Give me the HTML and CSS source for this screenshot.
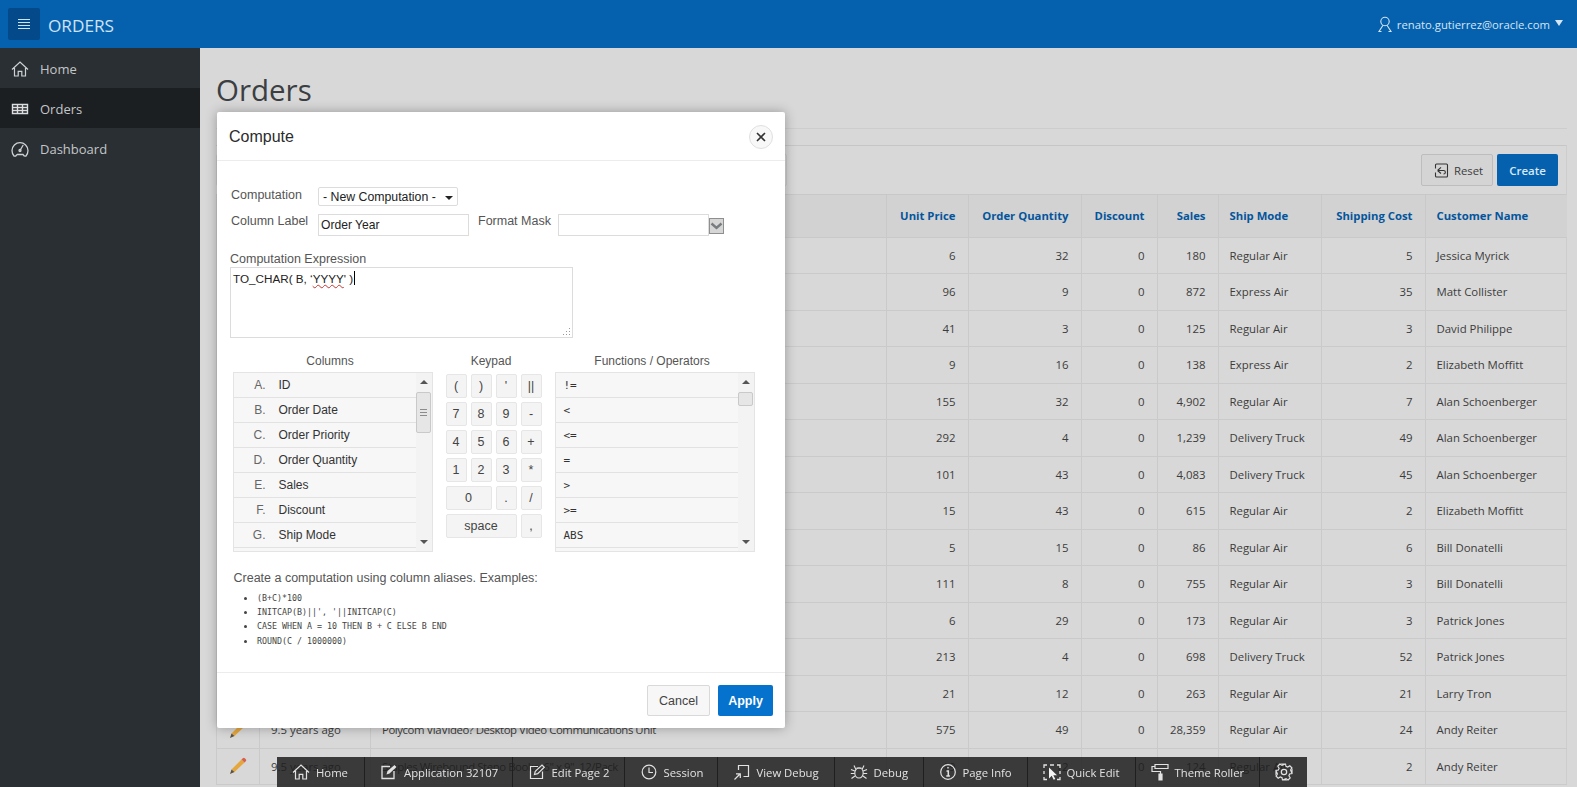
FILE: index.html
```html
<!DOCTYPE html>
<html lang="en">
<head>
  <meta charset="UTF-8" />
  <title>Orders</title>
  <link rel="stylesheet" href="styles.css">
</head>
<body>
  <header class="topbar">
    <button class="menu-btn" aria-label="Menu">
      <svg width="16" height="16" viewBox="0 0 16 16" stroke="#cfe3f5" stroke-width="1"><path d="M2 3.5h12M2 6.5h12M2 9.5h12M2 12.5h12"/></svg>
    </button>
    <div class="app-name">ORDERS</div>
    <div class="user">
      <svg width="14" height="17" viewBox="0 0 14 17" fill="none" stroke="#d5e5f3" stroke-width="1.1"><circle cx="7" cy="5.500" r="4.200"/><path d="M5 9.300 1 15.500h2.500M9 9.300l4 6.200h-2.500"/></svg>
      <span>renato.gutierrez@oracle.com</span>
      <i class="caret"></i>
    </div>
  </header>

  <div class="layout">
    <aside class="sidebar">
      <a class="nav-item">
        <svg width="18" height="18" viewBox="0 0 18 18" fill="none" stroke="#cfd2d4" stroke-width="1.2"><path d="M1 9.500 9 2l8 7.500M3.500 8v8h3.700v-4.600h3.600V16h3.700V8"/></svg>
        Home
      </a>
      <a class="nav-item active">
        <svg width="18" height="18" viewBox="0 0 18 18" fill="none" stroke="#dcdee0" stroke-width="1.400"><path d="M1.500 4.500h15v9h-15zM1.500 7.500h15M1.500 10.500h15M6.500 4.500v9M11.500 4.500v9"/></svg>
        Orders
      </a>
      <a class="nav-item">
        <svg width="18" height="18" viewBox="0 0 18 18" fill="none" stroke="#cfd2d4" stroke-width="1.300"><path d="M4.500 16.200h-1.300a8 8 0 1 1 11.600 0h-1.300M4.500 16.200l1.500-1.700M13.500 16.200 12 14.500h-6M9 10.500l3.200-5.500"/><circle cx="9" cy="10.500" r="1"/></svg>
        Dashboard
      </a>
    </aside>

    <main class="content">
      <h1 class="page-title">Orders</h1>
      <section class="panel">
        <div class="toolbar">
          <div class="search"></div>
          <button class="btn-reset">
            <svg width="15" height="15" viewBox="0 0 15 15" fill="none" stroke="#333" stroke-width="1.100"><path d="M1.500 5.500V2a1 1 0 0 1 1-1h10a1 1 0 0 1 1 1v11a1 1 0 0 1-1 1h-10a1 1 0 0 1-1-1V9.500"/><path d="M3.500 7.500 7 4.300M3.500 7.500 7 10.500M3.500 7.500h6c2.500 0 2.500 3.500 0 3.500"/></svg>
            Reset
          </button>
          <button class="btn-create">Create</button>
        </div>
        <table class="report">
          <colgroup>
            <col class="c-edit"><col class="c-date"><col class="c-product"><col class="c-price"><col class="c-qty"><col class="c-disc"><col class="c-sales"><col class="c-mode"><col class="c-ship"><col class="c-name">
          </colgroup>
          <thead>
            <tr><th></th><th></th><th></th><th class="num">Unit Price</th><th class="num">Order Quantity</th><th class="num">Discount</th><th class="num">Sales</th><th>Ship Mode</th><th class="num">Shipping Cost</th><th>Customer Name</th></tr>
          </thead>
          <tbody>
            <tr><td></td><td></td><td></td><td class="num">6</td><td class="num">32</td><td class="num">0</td><td class="num">180</td><td>Regular Air</td><td class="num">5</td><td>Jessica Myrick</td></tr>
            <tr><td></td><td></td><td></td><td class="num">96</td><td class="num">9</td><td class="num">0</td><td class="num">872</td><td>Express Air</td><td class="num">35</td><td>Matt Collister</td></tr>
            <tr><td></td><td></td><td></td><td class="num">41</td><td class="num">3</td><td class="num">0</td><td class="num">125</td><td>Regular Air</td><td class="num">3</td><td>David Philippe</td></tr>
            <tr><td></td><td></td><td></td><td class="num">9</td><td class="num">16</td><td class="num">0</td><td class="num">138</td><td>Express Air</td><td class="num">2</td><td>Elizabeth Moffitt</td></tr>
            <tr><td></td><td></td><td></td><td class="num">155</td><td class="num">32</td><td class="num">0</td><td class="num">4,902</td><td>Regular Air</td><td class="num">7</td><td>Alan Schoenberger</td></tr>
            <tr><td></td><td></td><td></td><td class="num">292</td><td class="num">4</td><td class="num">0</td><td class="num">1,239</td><td>Delivery Truck</td><td class="num">49</td><td>Alan Schoenberger</td></tr>
            <tr><td></td><td></td><td></td><td class="num">101</td><td class="num">43</td><td class="num">0</td><td class="num">4,083</td><td>Delivery Truck</td><td class="num">45</td><td>Alan Schoenberger</td></tr>
            <tr><td></td><td></td><td></td><td class="num">15</td><td class="num">43</td><td class="num">0</td><td class="num">615</td><td>Regular Air</td><td class="num">2</td><td>Elizabeth Moffitt</td></tr>
            <tr><td></td><td></td><td></td><td class="num">5</td><td class="num">15</td><td class="num">0</td><td class="num">86</td><td>Regular Air</td><td class="num">6</td><td>Bill Donatelli</td></tr>
            <tr><td></td><td></td><td></td><td class="num">111</td><td class="num">8</td><td class="num">0</td><td class="num">755</td><td>Regular Air</td><td class="num">3</td><td>Bill Donatelli</td></tr>
            <tr><td></td><td></td><td></td><td class="num">6</td><td class="num">29</td><td class="num">0</td><td class="num">173</td><td>Regular Air</td><td class="num">3</td><td>Patrick Jones</td></tr>
            <tr><td></td><td></td><td></td><td class="num">213</td><td class="num">4</td><td class="num">0</td><td class="num">698</td><td>Delivery Truck</td><td class="num">52</td><td>Patrick Jones</td></tr>
            <tr><td></td><td></td><td></td><td class="num">21</td><td class="num">12</td><td class="num">0</td><td class="num">263</td><td>Regular Air</td><td class="num">21</td><td>Larry Tron</td></tr>
            <tr>
              <td class="edit"><svg width="18" height="18" viewBox="0 0 18 18"><path d="M12.500 2.500 15.500 5.500 5.500 15 2.500 12.500z" fill="#e5a63c"/><path d="M12.500 2.500 13.800 1.300a1.400 1.400 0 0 1 2 0l1 1a1.400 1.400 0 0 1 0 2L15.500 5.500z" fill="#d8604a"/><path d="M2.500 12.500 5.500 15l-4.500 2z" fill="#5b5140"/></svg></td>
              <td>9.5 years ago</td><td class="product">Polycom ViaVideo? Desktop Video Communications Unit</td><td class="num">575</td><td class="num">49</td><td class="num">0</td><td class="num">28,359</td><td>Regular Air</td><td class="num">24</td><td>Andy Reiter</td>
            </tr>
            <tr>
              <td class="edit"><svg width="18" height="18" viewBox="0 0 18 18"><path d="M12.500 2.500 15.500 5.500 5.500 15 2.500 12.500z" fill="#e5a63c"/><path d="M12.500 2.500 13.800 1.300a1.400 1.400 0 0 1 2 0l1 1a1.400 1.400 0 0 1 0 2L15.500 5.500z" fill="#d8604a"/><path d="M2.500 12.500 5.500 15l-4.500 2z" fill="#5b5140"/></svg></td>
              <td>9.5 years ago</td><td class="product">Staples Wirebound Steno Books, 6" x 9", 12/Pack</td><td class="num">19</td><td class="num">12</td><td class="num">0</td><td class="num">124</td><td>Regular Air</td><td class="num">2</td><td>Andy Reiter</td>
            </tr>
          </tbody>
        </table>
      </section>
    </main>
  </div>

  <div class="dialog">
    <div class="dialog-head">
      <h2>Compute</h2>
      <button class="close" aria-label="Close">
        <svg width="10" height="10" viewBox="0 0 10 10" stroke="#333" stroke-width="1.6"><path d="M1 1l8 8M9 1 1 9"/></svg>
      </button>
    </div>

    <div class="dialog-body">
      <div class="form-row row-select">
        <label class="lbl">Computation</label>
        <div class="select">- New Computation -<i class="select-arrow"></i></div>
      </div>
      <div class="form-row row-label">
        <label class="lbl">Column Label</label>
        <div class="field field-label">Order Year</div>
        <label class="lbl lbl-mask">Format Mask</label>
        <div class="field field-mask"></div>
        <div class="combo-btn"><svg width="15" height="16" viewBox="0 0 15 16" fill="none" stroke="#777c80" stroke-width="2.400"><path d="M2.500 5.500 7.500 10l5-4.500"/></svg></div>
      </div>

      <label class="lbl lbl-expr">Computation Expression</label>
      <div class="expr">TO_CHAR( B, ‘<span class="squiggle">YYYY</span>' )<span class="cursor"></span>
        <svg class="grip" width="9" height="9" viewBox="0 0 9 9" fill="#999"><path d="M7 1h1v1H7zM4 4h1v1H4zM7 4h1v1H7zM1 7h1v1H1zM4 7h1v1H4zM7 7h1v1H7z"/></svg>
      </div>

      <div class="picker">
        <div class="picker-col">
          <div class="picker-title">Columns</div>
          <div class="listbox">
            <ul class="list">
              <li><span class="alias">A.</span>ID</li>
              <li><span class="alias">B.</span>Order Date</li>
              <li><span class="alias">C.</span>Order Priority</li>
              <li><span class="alias">D.</span>Order Quantity</li>
              <li><span class="alias">E.</span>Sales</li>
              <li><span class="alias">F.</span>Discount</li>
              <li><span class="alias">G.</span>Ship Mode</li>
            </ul>
            <div class="scroll"><i class="up"></i><div class="thumb thumb-tall"></div><i class="down"></i></div>
          </div>
        </div>

        <div class="picker-col keypad-col">
          <div class="picker-title">Keypad</div>
          <div class="keypad">
            <button>(</button><button>)</button><button>'</button><button>||</button>
            <button>7</button><button>8</button><button>9</button><button>-</button>
            <button>4</button><button>5</button><button>6</button><button>+</button>
            <button>1</button><button>2</button><button>3</button><button>*</button>
            <button class="span2">0</button><button>.</button><button>/</button>
            <button class="span3">space</button><button>,</button>
          </div>
        </div>

        <div class="picker-col">
          <div class="picker-title">Functions / Operators</div>
          <div class="listbox">
            <ul class="list list-mono">
              <li>!=</li>
              <li>&lt;</li>
              <li>&lt;=</li>
              <li>=</li>
              <li>&gt;</li>
              <li>&gt;=</li>
              <li>ABS</li>
            </ul>
            <div class="scroll"><i class="up"></i><div class="thumb thumb-short"></div><i class="down"></i></div>
          </div>
        </div>
      </div>

      <p class="hint">Create a computation using column aliases. Examples:</p>
      <ul class="examples">
        <li>(B+C)*100</li>
        <li>INITCAP(B)||', '||INITCAP(C)</li>
        <li>CASE WHEN A = 10 THEN B + C ELSE B END</li>
        <li>ROUND(C / 1000000)</li>
      </ul>
    </div>

    <div class="dialog-foot">
      <button class="btn-cancel">Cancel</button>
      <button class="btn-apply">Apply</button>
    </div>
  </div>

  <div class="dev-bar">
    <a class="dev-item">
      <svg width="18" height="18" viewBox="0 0 18 18" fill="none" stroke="#e2e2e2" stroke-width="1.2"><path d="M1 9.500 9 2l8 7.500M3.500 8v8h3.700v-4.600h3.600V16h3.700V8"/></svg>Home</a>
    <a class="dev-item">
      <svg width="18" height="18" viewBox="0 0 18 18" fill="none" stroke="#e2e2e2" stroke-width="1.300"><path d="M10 3.500H2v12h12V8"/><path d="M6.500 11.500 7.500 8l7-6 2 2-7 6.500z" fill="#e2e2e2" stroke="none"/></svg>Application 32107</a>
    <a class="dev-item">
      <svg width="18" height="18" viewBox="0 0 18 18" fill="none" stroke="#e2e2e2" stroke-width="1.200"><path d="M10 3.500H2.500v12h12V8.500"/><path d="M6.500 11.500l.8-3.300 6.700-6.200 2.300 2.300-6.600 6.400z"/></svg>Edit Page 2</a>
    <a class="dev-item">
      <svg width="18" height="18" viewBox="0 0 18 18" fill="none" stroke="#e2e2e2" stroke-width="1.200"><circle cx="9" cy="9" r="6.800"/><path d="M9 4.500V9.500H13"/></svg>Session</a>
    <a class="dev-item">
      <svg width="18" height="18" viewBox="0 0 18 18" fill="none" stroke="#e2e2e2" stroke-width="1.200"><path d="M5.500 7V2.500h10v11h-5M1.500 16.500l5.500-5.500M3 10.800h4.300v4.300"/></svg>View Debug</a>
    <a class="dev-item">
      <svg width="18" height="18" viewBox="0 0 18 18" fill="none" stroke="#e2e2e2" stroke-width="1.100"><ellipse cx="9" cy="10" rx="4.200" ry="5"/><path d="M5.800 6.200 4 2.500M12.200 6.200 14 2.500M6.500 5h5M1 6.500l3.800 1.500M17 6.500 13.200 8M.8 10.500h4M17.200 10.500h-4M1.500 15.500l3.500-2.500M16.500 15.500 13 13"/></svg>Debug</a>
    <a class="dev-item">
      <svg width="18" height="18" viewBox="0 0 18 18" fill="none" stroke="#e2e2e2" stroke-width="1.200"><circle cx="9" cy="9" r="7.300"/><path d="M7.500 8h1.800v5M7.300 13h3.600M8.300 4.800h1.400" stroke-width="1.500"/></svg>Page Info</a>
    <a class="dev-item">
      <svg width="18" height="18" viewBox="0 0 18 18" fill="none" stroke="#e2e2e2" stroke-width="1.300"><path d="M1 5V2h3M7 2h4M14 2h3v3M1 8v3M17 8v3M1 14v2.500h3M14 16.500h3V14"/><path d="M6 4.500v11l2.700-2.700 2 4 1.600-.8-2-3.800h3.700z" fill="#f4f4f4" stroke="none"/></svg>Quick Edit</a>
    <a class="dev-item">
      <svg width="18" height="18" viewBox="0 0 18 18" fill="none" stroke="#e2e2e2" stroke-width="1.200"><path d="M4 1.500h13v4H4zM4 3.500H1v5h8.500v2.500"/><path d="M8 11h3v6H8z" fill="#e2e2e2"/></svg>Theme Roller</a>
    <a class="dev-item">
      <svg width="18" height="18" viewBox="-9 -9 18 18" fill="none" stroke="#e2e2e2" stroke-width="1.200"><circle r="2.700"/><path d="M-1.500-8h3l.5 2.400 1.700.7 2.100-1.300 2.100 2.100-1.300 2.100.7 1.700L8-1.500v3l-2.400.5-.7 1.700 1.300 2.100-2.100 2.100-2.100-1.300-1.700.7L1.500 8h-3L-2 5.600l-1.700-.7-2.100 1.300-2.100-2.100 1.300-2.100-.7-1.700L-8 1.500v-3l2.400-.5.7-1.700-1.300-2.100 2.100-2.100 2.100 1.300 1.700-.7z"/></svg></a>
  </div>
</body>
</html>
```

FILE: styles.css
```css
* {
  box-sizing: border-box;
  margin: 0;
  padding: 0;
}

html, body {
  height: 787px;
  overflow: hidden;
}

body {
  font-family: "Open Sans", sans-serif;
  font-size: 12px;
  color: #3c3c3c;
  background-color: #d8d8d8;
}

button {
  font-family: inherit;
  cursor: pointer;
}

/* top bar */
.topbar {
  display: flex;
  align-items: center;
  height: 48px;
  padding: 0 8px;
  background-color: #0561ae;
  color: #cfe3f5;
}

.menu-btn {
  display: flex;
  align-items: center;
  justify-content: center;
  width: 32px;
  height: 32px;
  border: none;
  border-radius: 2px;
  background-color: #04498a;
}

.app-name {
  margin-left: 8px;
  padding-top: 2px;
  font-size: 17.200px;
}

.user {
  display: flex;
  align-items: center;
  gap: 5px;
  margin-left: auto;
  margin-right: 6px;
  font-size: 11.300px;
  color: #d5e5f3;
}

.caret {
  width: 0;
  height: 0;
  border-left: 4px solid transparent;
  border-right: 4px solid transparent;
  border-top: 6px solid #d5e5f3;
  margin-bottom: 2px;
}

.layout {
  display: flex;
  height: 739px;
}

/* side nav */
.sidebar {
  flex: 0 0 200px;
  background-color: #2a2f33;
}

.nav-item {
  display: flex;
  align-items: center;
  gap: 11px;
  height: 40px;
  padding: 2px 0 0 11px;
  font-size: 13px;
  color: #c4c6c8;
}

.nav-item.active {
  background-color: #1c1f22;
}

/* page */
.content {
  flex: 1;
  padding: 0 10px 0 16px;
  min-width: 0;
}

.page-title {
  height: 81px;
  padding-top: 19px;
  font-size: 29.500px;
  line-height: 46px;
  font-weight: 400;
  color: #3b3e42;
  border-bottom: 1px solid #cdcdcd;
}

.panel {
  margin-top: 16px;
  border-top: 1px solid #c6c6c6;
  border-right: 1px solid #cdcdcd;
}

.toolbar {
  display: flex;
  align-items: center;
  gap: 4px;
  height: 49px;
  padding-right: 8px;
  border-bottom: 1px solid #c8c8c8;
}

.search {
  width: 571px;
  height: 32px;
  border: 1px solid #cacaca;
  border-radius: 2px;
  margin-right: auto;
}

.btn-reset {
  display: flex;
  align-items: center;
  gap: 5px;
  width: 72px;
  height: 32px;
  padding-left: 12px;
  font-size: 11.300px;
  color: #3c3c3c;
  background-color: #d4d4d4;
  border: 1px solid #bdbdbd;
  border-radius: 2px;
}

.btn-create {
  width: 61px;
  height: 32px;
  font-size: 11.500px;
  font-weight: 600;
  color: #d8e8f5;
  background-color: #0561ae;
  border: none;
  border-radius: 2px;
}

/* report */
.report {
  width: 1350px;
  table-layout: fixed;
  border-collapse: collapse;
}

.c-edit { width: 43px; }
.c-date { width: 111px; }
.c-product { width: 516px; }
.c-price { width: 81.500px; }
.c-qty { width: 113px; }
.c-disc { width: 76px; }
.c-sales { width: 61px; }
.c-mode { width: 103.500px; }
.c-ship { width: 103.500px; }
.c-name { width: 142px; }

.report th {
  height: 42px;
  padding: 0 12px 0 11px;
  text-align: left;
  font-weight: 700;
  font-size: 11.300px;
  color: #04559c;
  background-color: #d2d2d2;
  border-left: 1px solid #c9c9c9;
  border-bottom: 1px solid #c9c9c9;
  white-space: nowrap;
}

.report td {
  height: 36.500px;
  padding: 0 12px 0 11px;
  font-size: 11.400px;
  border-left: 1px solid #cacaca;
  border-bottom: 1px solid #cacaca;
  white-space: nowrap;
  overflow: hidden;
}

.report .num {
  text-align: right;
}

.report td.edit {
  padding: 0 0 0 12px;
}

.report td.product {
  letter-spacing: -0.450px;
}

.edit svg {
  display: block;
}

/* compute dialog */
.dialog {
  position: absolute;
  left: 217px;
  top: 112px;
  width: 568px;
  height: 616px;
  display: flex;
  flex-direction: column;
  background-color: #fff;
  border-radius: 2px;
  box-shadow: 0 0 12px rgba(0, 0, 0, 0.3);
  font-family: "Liberation Sans", Arial, sans-serif;
}

.dialog-head {
  display: flex;
  align-items: center;
  justify-content: space-between;
  flex: 0 0 49px;
  padding: 1px 12px 0;
  border-bottom: 1px solid #ececec;
}

.dialog-head h2 {
  font-size: 16px;
  font-weight: 400;
  color: #2c2c2c;
}

.close {
  display: flex;
  align-items: center;
  justify-content: center;
  width: 24px;
  height: 24px;
  border: 1px solid #e0e0e0;
  border-radius: 50%;
  background-color: #f8f8f8;
}

.dialog-body {
  flex: 1;
  padding: 26px 13px 0;
}

.form-row {
  display: flex;
  align-items: flex-start;
}

.lbl {
  display: block;
  font-size: 12.500px;
  line-height: 16px;
  color: #555;
}

.row-select .lbl,
.row-label .lbl {
  width: 88px;
  padding-left: 1px;
}

.row-label .lbl {
  margin-top: -1px;
}

.select {
  position: relative;
  width: 140px;
  height: 19px;
  padding-left: 4px;
  font-size: 12.300px;
  line-height: 18px;
  color: #222;
  border: 1px solid #dcdcdc;
  border-radius: 2px;
}

.select-arrow {
  position: absolute;
  right: 4px;
  top: 8px;
  border-left: 4px solid transparent;
  border-right: 4px solid transparent;
  border-top: 4px solid #222;
}

.row-label {
  margin-top: 8px;
}

.field {
  height: 22px;
  padding-left: 2px;
  font-size: 12.100px;
  line-height: 20px;
  color: #222;
  border: 1px solid #dcdcdc;
}

.field-label {
  width: 151px;
}

.row-label .lbl-mask {
  width: 80px;
  margin-left: 9px;
  padding-left: 0;
}

.field-mask {
  width: 151px;
}

.combo-btn {
  width: 15px;
  height: 16px;
  margin-top: 4px;
  background-color: #d6d6d6;
  border: 1px solid #8f8f8f;
}

.combo-btn svg {
  display: block;
  margin: -1px;
}

.lbl-expr {
  margin-top: 15px;
}

.expr {
  position: relative;
  width: 343px;
  height: 71px;
  padding: 3px 2px;
  font-size: 11.700px;
  line-height: 16px;
  color: #222;
  border: 1px solid #dcdcdc;
}

.squiggle {
  text-decoration: underline wavy #c8362e 1px;
}

.cursor {
  display: inline-block;
  width: 1px;
  height: 14px;
  margin-left: 1px;
  vertical-align: -2px;
  background-color: #000;
}

.grip {
  position: absolute;
  right: 1px;
  bottom: 1px;
}

.picker {
  display: flex;
  align-items: flex-start;
  gap: 13px;
  margin-top: 16px;
  padding-left: 2.500px;
}

.picker-title {
  height: 18px;
  padding-right: 5px;
  font-size: 12px;
  line-height: 14px;
  text-align: center;
  color: #555;
}

.listbox {
  display: flex;
  width: 200px;
  height: 180px;
  border: 1px solid #e4e4e4;
  background-color: #f7f7f7;
  overflow: hidden;
}

.list {
  flex: 1;
  list-style: none;
}

.list li {
  display: flex;
  align-items: center;
  height: 25px;
  font-size: 12px;
  color: #333;
  border-bottom: 1px solid #e2e2e2;
}

.alias {
  width: 32px;
  margin-right: 13px;
  text-align: right;
  color: #666;
}

.list-mono li {
  padding-left: 8px;
  font-family: "DejaVu Sans Mono", monospace;
  font-size: 11px;
}

.scroll {
  position: relative;
  flex: 0 0 16px;
  background-color: #f3f3f3;
}

.up, .down {
  position: absolute;
  left: 4px;
  border-left: 4px solid transparent;
  border-right: 4px solid transparent;
}

.up {
  top: 7px;
  border-bottom: 4px solid #555;
}

.down {
  bottom: 7px;
  border-top: 4px solid #555;
}

.thumb {
  position: absolute;
  left: 0;
  top: 19px;
  width: 15px;
  background-color: #e6e6e6;
  border: 1px solid #c9c9c9;
  border-radius: 2px;
}

.thumb-tall {
  height: 41px;
}

/* grip lines on the long scrollbar thumb */
.thumb-tall::after {
  content: "";
  position: absolute;
  left: 3px;
  top: 16px;
  width: 7px;
  height: 7px;
  background: repeating-linear-gradient(#8c8c8c 0 1px, transparent 1px 3px);
}

.thumb-short {
  height: 14px;
}

.keypad-col {
  width: 96px;
}

.keypad {
  display: grid;
  grid-template-columns: repeat(4, 21px);
  grid-auto-rows: 24px;
  gap: 4px;
  padding-top: 1.500px;
}

.keypad button {
  font-family: inherit;
  font-size: 12.500px;
  color: #444;
  background-color: #f4f4f4;
  border: 1px solid #e6e6e6;
  border-radius: 2px;
}

.keypad .span2 {
  grid-column: span 2;
}

.keypad .span3 {
  grid-column: span 3;
}

.hint {
  margin-top: 18px;
  padding-left: 3.500px;
  font-size: 12.500px;
  line-height: 16px;
  color: #555;
}

.examples {
  margin-top: 5px;
  padding-left: 27px;
  font-family: "DejaVu Sans Mono", monospace;
  font-size: 8.300px;
  line-height: 14.200px;
  color: #444;
}

.examples li::marker {
  font-size: 11px;
}

.dialog-foot {
  display: flex;
  align-items: center;
  justify-content: flex-end;
  gap: 8px;
  flex: 0 0 56px;
  padding: 0 12px;
  border-top: 1px solid #ececec;
}

.dialog-foot button {
  height: 31px;
  font-family: "Liberation Sans", Arial, sans-serif;
  font-size: 12.500px;
  border-radius: 2px;
}

.btn-cancel {
  width: 63px;
  color: #444;
  background-color: #f7f7f7;
  border: 1px solid #d9d9d9;
}

.btn-apply {
  width: 55px;
  font-weight: 700;
  color: #fff;
  background-color: #0572ce;
  border: none;
}

/* developer toolbar */
.dev-bar {
  position: fixed;
  left: 277px;
  bottom: 0;
  height: 30px;
  display: grid;
  grid-template-columns: 88px 147.500px 112px 93px 117px 89px 104px 108px 124px 47px;
  background-color: rgba(30, 30, 30, 0.85);
}

.dev-item {
  display: flex;
  align-items: center;
  gap: 6px;
  padding-left: 15px;
  font-size: 11.300px;
  color: #e2e2e2;
  border-right: 1px solid #1f1f1f;
}

.dev-item:last-child {
  border-right: none;
}
```
